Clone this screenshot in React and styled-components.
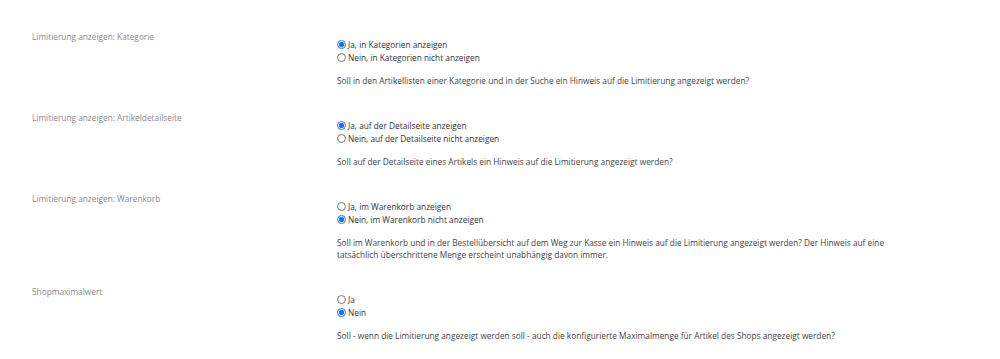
import React, { useState } from 'react'
import styled, { createGlobalStyle } from 'styled-components'

const GlobalStyle = createGlobalStyle`
    html, body {
        margin: 0;
        padding: 0;
        background: #fff;
    }
    body {
        font-family: "Open Sans", "Noto Sans", sans-serif;
    }
`

const Page = styled.div`
    padding: 31px 0 0 32px;
    width: 1000px;
    box-sizing: border-box;
`

const Row = styled.div`
    display: grid;
    grid-template-columns: 305px 558px;
    padding-bottom: 25px;
`

const Label = styled.div`
    font-size: 8.3px;
    line-height: 12px;
    color: #8a8a8a;
`

const Field = styled.div`
    padding-top: 7px;
    display: flex;
    flex-direction: column;
`

const Options = styled.div`
    display: flex;
    flex-direction: column;
`

const Option = styled.label`
    display: flex;
    align-items: center;
    gap: 2px;
    height: 13px;
    font-size: 8.3px;
    color: #333;
    cursor: pointer;
`

const Dot = styled.span`
    width: 9px;
    height: 9px;
    box-sizing: border-box;
    border-radius: 50%;
    border: 1px solid ${p => (p.$checked ? '#1a73e8' : '#767676')};
    background: ${p => (p.$checked ? 'radial-gradient(circle, #1a73e8 0 2.6px, #fff 2.9px)' : '#fff')};
    flex: none;
`

const Hint = styled.p`
    margin: 11px 0 0;
    font-size: 8.3px;
    line-height: 12px;
    color: #444;
`

const settings = [
    {
        name: 'kategorie',
        label: 'Limitierung anzeigen: Kategorie',
        options: ['Ja, in Kategorien anzeigen', 'Nein, in Kategorien nicht anzeigen'],
        value: 0,
        hint: 'Soll in den Artikellisten einer Kategorie und in der Suche ein Hinweis auf die Limitierung angezeigt werden?'
    },
    {
        name: 'detail',
        label: 'Limitierung anzeigen: Artikeldetailseite',
        options: ['Ja, auf der Detailseite anzeigen', 'Nein, auf der Detailseite nicht anzeigen'],
        value: 0,
        hint: 'Soll auf der Detailseite eines Artikels ein Hinweis auf die Limitierung angezeigt werden?'
    },
    {
        name: 'warenkorb',
        label: 'Limitierung anzeigen: Warenkorb',
        options: ['Ja, im Warenkorb anzeigen', 'Nein, im Warenkorb nicht anzeigen'],
        value: 1,
        hint: 'Soll im Warenkorb und in der Bestellübersicht auf dem Weg zur Kasse ein Hinweis auf die Limitierung angezeigt werden? Der Hinweis auf eine tatsächlich überschrittene Menge erscheint unabhängig davon immer.'
    },
    {
        name: 'shopmax',
        label: 'Shopmaximalwert',
        options: ['Ja', 'Nein'],
        value: 1,
        hint: 'Soll - wenn die Limitierung angezeigt werden soll - auch die konfigurierte Maximalmenge für Artikel des Shops angezeigt werden?'
    }
]

const SettingRow = ({ setting }) => {
    const [value, setValue] = useState(setting.value)

    return (
        <Row>
            <Label>{setting.label}</Label>
            <Field>
                <Options>
                    {setting.options.map((text, i) => (
                        <Option key={i} onClick={() => setValue(i)}>
                            <Dot $checked={value === i} />
                            {text}
                        </Option>
                    ))}
                </Options>
                <Hint>{setting.hint}</Hint>
            </Field>
        </Row>
    )
}

const App = () => {
    return (
        <>
            <GlobalStyle />
            <Page>
                {settings.map(s => (
                    <SettingRow key={s.name} setting={s} />
                ))}
            </Page>
        </>
    )
}

export default App
